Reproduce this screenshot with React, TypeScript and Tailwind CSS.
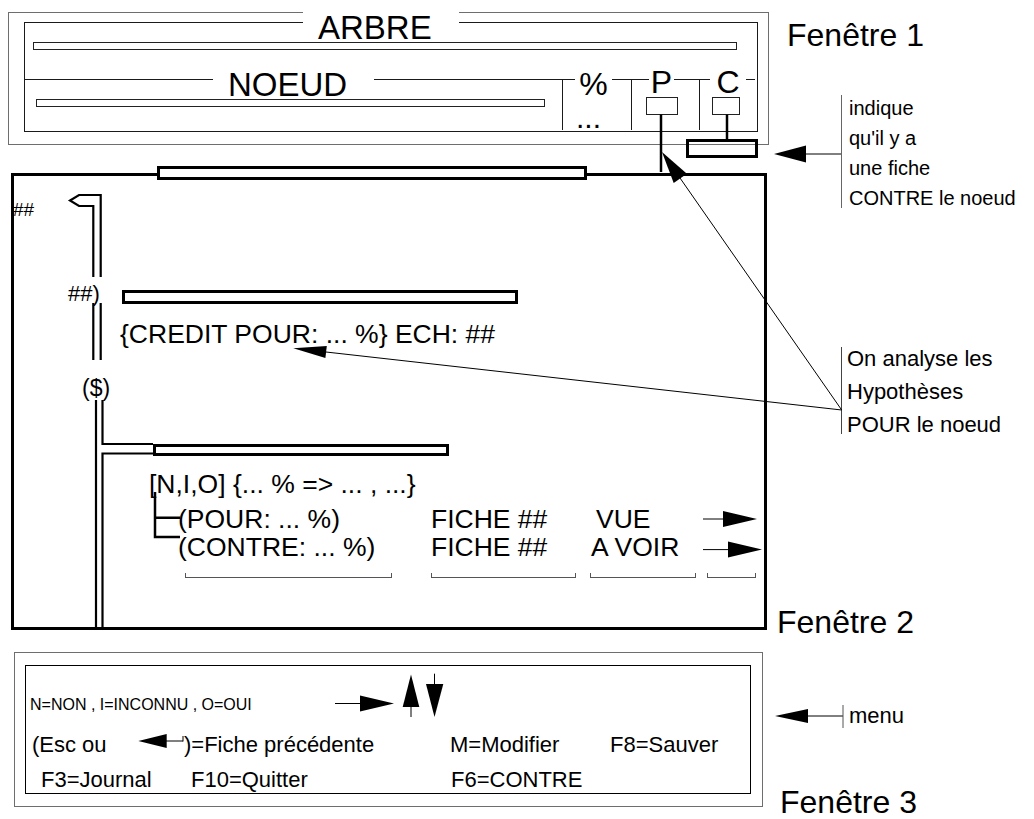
import React from "react";

// Schéma des trois fenêtres de l'écran d'analyse (arbre / noeud / menu)

const HLine = ({ className = "" }: { className?: string }) => (
    <div className={"h-px bg-[#1a1a1a] mt-[13px] " + className}></div>
);

function Window1() {
    return (
        <div className="relative ml-[8px] w-[761px] h-[133px] shrink-0 border border-[#6e6e6e] pl-[15px] pt-[9px]">
            {/* titre ARBRE posé sur les deux traits du haut */}
            <div className="absolute left-[294px] top-[-5px] w-[156px] h-[33px] bg-white pl-[15px] pt-[3px] text-[33px] leading-none">
                ARBRE
            </div>

            <div className="w-[734px] h-[110px] border border-[#1a1a1a] flex flex-col">
                <div className="ml-[8px] mt-[19px] w-[704px] h-[8px] border border-[#222]"></div>

                <div className="mt-[16px] h-[65px] flex">
                    {/* NOEUD */}
                    <div className="w-[537px] flex flex-col">
                        <div className="h-[26px] flex items-start">
                            <HLine className="w-[188px]" />
                            <div className="w-[161px] pl-[15px] pt-[2px] text-[33px] leading-none">NOEUD</div>
                            <HLine className="flex-1" />
                        </div>
                        <div className="ml-[11px] mt-[7px] w-[509px] h-[8px] border border-[#222]"></div>
                    </div>

                    {/* % */}
                    <div className="flex">
                        <div className="w-px h-[51px] mt-[13px] bg-[#1a1a1a]"></div>
                        <div className="w-[68px] flex flex-col">
                            <div className="h-[26px] flex items-start">
                                <HLine className="w-[12px]" />
                                <div className="w-[37px] pt-[2px] text-center text-[32px] leading-none">%</div>
                                <HLine className="flex-1" />
                            </div>
                            <div className="pl-[13px] mt-[11px] text-[30px] leading-none">...</div>
                        </div>
                    </div>

                    {/* P */}
                    <div className="flex">
                        <div className="w-px h-[51px] mt-[13px] bg-[#1a1a1a]"></div>
                        <div className="w-[67px] flex flex-col">
                            <div className="h-[26px] flex items-start">
                                <HLine className="w-[17px]" />
                                <div className="w-[25px] text-center text-[32px] leading-none">P</div>
                                <HLine className="flex-1" />
                            </div>
                            <div className="ml-[14px] mt-[5px] w-[32px] h-[18px] border border-[#222]"></div>
                        </div>
                    </div>

                    {/* C */}
                    <div className="flex">
                        <div className="w-px h-[51px] mt-[13px] bg-[#1a1a1a]"></div>
                        <div className="w-[57px] flex flex-col">
                            <div className="h-[26px] flex items-start">
                                <HLine className="w-[10px]" />
                                <div className="w-[36px] text-center text-[32px] leading-none">C</div>
                                <HLine className="w-[9px]" />
                            </div>
                            <div className="ml-[12px] mt-[5px] w-[28px] h-[18px] border border-[#222]"></div>
                        </div>
                    </div>
                </div>
            </div>
        </div>
    );
}

const RowArrow = ({ shaft, cy }: { shaft: number; cy: number }) => (
    <svg width="60" height="28" viewBox="0 0 60 28" className="block">
        <path d={`M0 ${cy} H${shaft + 1}`} stroke="black" strokeWidth={1} />
        <polygon points={`${shaft},${cy - 8} ${shaft + 34},${cy} ${shaft},${cy + 8}`} fill="black" />
    </svg>
);

function Window2() {
    return (
        <div className="relative ml-[11px] mt-[28px] w-[756px] h-[457px] shrink-0 border-[3px] border-black pl-[164px] pt-[329px]">
            {/* barre de titre sur le cadre */}
            <div className="absolute left-[143px] top-[-10px] w-[430px] h-[14px] border-[3px] border-black bg-white"></div>

            {/* noeuds de l'arbre */}
            <div className="absolute left-[-1px] top-[24px] text-[19px] leading-none">##</div>
            <div className="absolute left-[54px] top-[107px] text-[22px] leading-none">##)</div>
            <div className="absolute left-[108px] top-[114px] w-[396px] h-[14px] border-[3px] border-black"></div>
            <div className="absolute left-[106px] top-[145px] text-[26.5px] leading-none whitespace-nowrap">
                {"{CREDIT POUR: ... %} ECH: ##"}
            </div>
            <div className="absolute left-[68px] top-[201px] text-[23px] leading-none">($)</div>
            <div className="absolute left-[139px] top-[268px] w-[296px] h-[12px] border-[3px] border-black"></div>
            <div className="absolute left-[135px] top-[295px] text-[26.5px] leading-none whitespace-nowrap">
                {"[N,I,O] {... % => ... , ...}"}
            </div>

            {/* hypothèses POUR / CONTRE */}
            <div className="grid grid-cols-[253px_159px_113px_60px] text-[26.5px] leading-[28px] whitespace-nowrap">
                <div>(POUR: ... %)</div>
                <div>FICHE ##</div>
                <div className="pl-[6px]">VUE</div>
                <RowArrow shaft={20} cy={14} />

                <div>(CONTRE: ... %)</div>
                <div>FICHE ##</div>
                <div className="pl-[1px]">A VOIR</div>
                <RowArrow shaft={25} cy={16.6} />
            </div>
            <div className="mt-[12px] flex">
                <div className="ml-[7px] w-[207px] h-[5px] border-x border-b border-[#555]"></div>
                <div className="ml-[39px] w-[145px] h-[5px] border-x border-b border-[#555]"></div>
                <div className="ml-[14px] w-[106px] h-[5px] border-x border-b border-[#555]"></div>
                <div className="ml-[11px] w-[49px] h-[5px] border-x border-b border-[#555]"></div>
            </div>
        </div>
    );
}

function Window3() {
    return (
        <div className="ml-[14px] mt-[22px] w-[749px] h-[155px] shrink-0 border border-[#6e6e6e] pl-[10px] pt-[12px]">
            <div className="w-[726px] h-[129px] border border-black flex flex-col text-[22px] leading-none whitespace-nowrap">
                <div className="h-[52px] flex items-start">
                    <div className="w-[309px] pl-[4px] pt-[31px] text-[16px]">N=NON , I=INCONNU , O=OUI</div>
                    <svg width="110" height="45" viewBox="0 0 110 45" className="mt-[7px]">
                        <path d="M0 30.5 H26" stroke="black" strokeWidth={1} />
                        <polygon points="25,22.5 59,30.5 25,38.5" fill="black" />
                        <polygon points="76,1.5 67.7,34 84.3,34" fill="black" />
                        <path d="M76 33 V44" stroke="black" strokeWidth={1} />
                        <path d="M99.5 0.7 V12" stroke="black" strokeWidth={1} />
                        <polygon points="91,11 108.3,11 99.5,44" fill="black" />
                    </svg>
                </div>
                <div className="mt-[16px] flex items-start">
                    <div className="w-[112px] pl-[6px]">(Esc ou</div>
                    <svg width="46" height="16" viewBox="0 0 46 16" className="-mt-[1px]">
                        <polygon points="0.3,8 28.7,1 28.7,15" fill="black" />
                        <path d="M28 8 H45 M45 3 V8.5" stroke="black" strokeWidth={1} />
                    </svg>
                    <div className="w-[266px]">)=Fiche précédente</div>
                    <div className="w-[160px]">M=Modifier</div>
                    <div>F8=Sauver</div>
                </div>
                <div className="mt-[13px] flex items-start">
                    <div className="w-[165px] pl-[15px]">F3=Journal</div>
                    <div className="w-[260px]">F10=Quitter</div>
                    <div>F6=CONTRE</div>
                </div>
            </div>
        </div>
    );
}

function Connectors() {
    return (
        <svg
            className="absolute inset-0 w-full h-full pointer-events-none"
            viewBox="0 0 1034 819"
            fill="none"
            stroke="black"
        >
            {/* P et C */}
            <path d="M661 114.5 V172" strokeWidth={2.5} />
            <path d="M727 114.5 V140" strokeWidth={2.5} />
            <rect x={687.5} y={140.5} width={69} height={16} strokeWidth={3} />
            <path d="M806 154 H841" strokeWidth={1} />
            <polygon points="774,154 806,145.5 806,162.5" fill="black" stroke="none" />

            {/* fils vers les hypothèses */}
            <path d="M841.7 410 L326 352" strokeWidth={1} />
            <polygon points="293.3,348.3 325.4,358 326.8,346" fill="black" stroke="none" />
            <path d="M841.7 410 L680 178" strokeWidth={1} />
            <polygon points="662,152 673.7,182.9 686.9,173.7" fill="black" stroke="none" />

            {/* arbre */}
            <path d="M100.7 277 V195 H79 L70 200.5 L79 206 H93.3 V277" strokeWidth={2.2} />
            <path d="M93.3 303 V360 M100.7 303 V360" strokeWidth={2.2} />
            <path d="M96 400 V627 M102.5 400 V444 H153 M153 453.5 H102.5 V627" strokeWidth={2.2} />
            <path d="M155 492 V537 H180 M155 517.7 H180" strokeWidth={2.5} />

            {/* menu */}
            <polygon points="775,716 808,709 808,723" fill="black" stroke="none" />
            <path d="M807 716 H843" strokeWidth={1} />
            <path d="M843 705 V728" strokeWidth={1} stroke="#555" />
        </svg>
    );
}

export default function App() {
    return (
        <div className="relative w-[1034px] h-[819px] overflow-hidden bg-white text-black font-['Liberation_Sans',Arial,sans-serif]">
            <div className="flex flex-col items-start pt-[12px]">
                <Window1 />
                <Window2 />
                <Window3 />
            </div>

            <div className="absolute left-[787px] top-[19px] text-[32px] leading-none whitespace-nowrap">Fenêtre 1</div>
            <div className="absolute left-[777px] top-[606px] text-[32px] leading-none whitespace-nowrap">Fenêtre 2</div>
            <div className="absolute left-[780px] top-[786px] text-[32px] leading-none whitespace-nowrap">Fenêtre 3</div>

            <div className="absolute left-[841px] top-[95px] flex">
                <div className="w-px h-[113px] bg-[#666]"></div>
                <div className="pl-[7px] -mt-[2px] text-[20px] leading-[30px] whitespace-nowrap">
                    <div>indique</div>
                    <div>qu'il y a</div>
                    <div>une fiche</div>
                    <div>CONTRE le noeud</div>
                </div>
            </div>

            <div className="absolute left-[841px] top-[347px] flex">
                <div className="w-px h-[87px] bg-[#444]"></div>
                <div className="pl-[5px] -mt-[5px] text-[22px] leading-[33px] whitespace-nowrap">
                    <div>On analyse les</div>
                    <div>Hypothèses</div>
                    <div>POUR le noeud</div>
                </div>
            </div>

            <div className="absolute left-[849px] top-[705px] text-[22px] leading-none">menu</div>

            <Connectors />
        </div>
    );
}
